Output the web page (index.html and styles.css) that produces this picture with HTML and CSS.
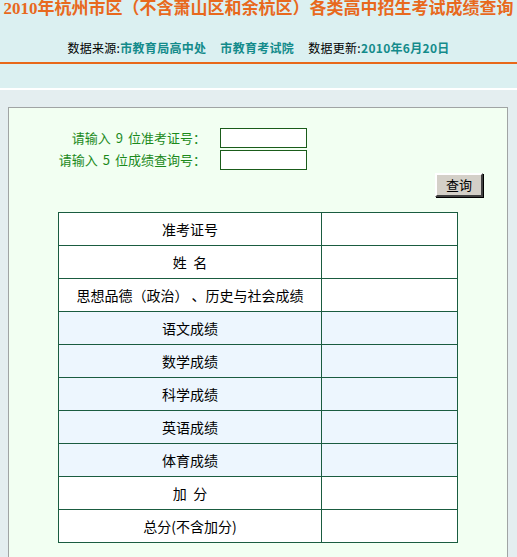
FILE: index.html
```html
<!DOCTYPE html>
<html lang="zh-CN">
<head>
<meta charset="utf-8">
<title>2010年杭州市区各类高中招生考试成绩查询</title>
<link rel="stylesheet" href="styles.css">
</head>
<body>
<div class="header">
  <h1 class="title">2010年杭州市区（不含萧山区和余杭区）各类高中招生考试成绩查询</h1>
  <p class="source">数据来源:<span class="hl">市教育局高中处</span><span class="hl gap">市教育考试院</span><span class="gap">数据更新:</span><span class="hl">2010年6月20日</span></p>
  <div class="rule"></div>
</div>
<div class="panel">
  <form class="query">
    <div class="fields">
      <label class="lbl" for="zkz">请输入<span class="num">9</span>位准考证号：</label>
      <input class="inp" id="zkz" type="text">
      <label class="lbl" for="cjh">请输入<span class="num">5</span>位成绩查询号：</label>
      <input class="inp" id="cjh" type="text">
    </div>
    <div class="actions"><button class="btn" type="button">查询</button></div>
  </form>
  <table class="result">
    <tr><td class="k">准考证号</td><td class="v"></td></tr>
    <tr><td class="k">姓&nbsp;&nbsp;名</td><td class="v"></td></tr>
    <tr><td class="k">思想品德（政治） 、历史与社会成绩</td><td class="v"></td></tr>
    <tr class="alt"><td class="k">语文成绩</td><td class="v"></td></tr>
    <tr class="alt"><td class="k">数学成绩</td><td class="v"></td></tr>
    <tr class="alt"><td class="k">科学成绩</td><td class="v"></td></tr>
    <tr class="alt"><td class="k">英语成绩</td><td class="v"></td></tr>
    <tr class="alt"><td class="k">体育成绩</td><td class="v"></td></tr>
    <tr><td class="k">加&nbsp;&nbsp;分</td><td class="v"></td></tr>
    <tr><td class="k">总分(不含加分)</td><td class="v"></td></tr>
  </table>
</div>
</body>
</html>
```
FILE: styles.css
```css
html, body {
  margin: 0;
  padding: 0;
}
body {
  background: #e4eef0;
  font-family: "Noto Sans CJK SC", "DejaVu Sans", sans-serif;
  color: #000;
  overflow: hidden;
}
.header {
  background: #dbf0f1;
  height: 88px;
  border-bottom: 2px solid #ffffff;
}
.title {
  margin: 0;
  font-family: "Liberation Serif", "Noto Sans CJK SC", serif;
  font-size: 17px;
  line-height: 17px;
  font-weight: bold;
  color: #e8691d;
  text-align: center;
  white-space: nowrap;
}
.source {
  margin: 24px 0 0;
  font-size: 12px;
  line-height: 14px;
  text-align: center;
  white-space: nowrap;
  letter-spacing: 0.3px;
}
.hl {
  color: #138b8b;
  font-weight: bold;
}
.gap {
  margin-left: 14px;
}
.rule {
  margin-top: 7px;
  height: 2px;
  background: #e8681a;
}
.panel {
  box-sizing: border-box;
  width: 500px;
  margin: 17px 0 0 8px;
  padding: 20px 0 40px;
  background: #f2fff2;
  border: 1px solid #a0a4a4;
  border-bottom: none;
  height: 460px;
}
.query {
  margin: 0;
}
.fields {
  display: grid;
  grid-template-columns: 197px 87px;
  column-gap: 14px;
  row-gap: 2px;
  align-items: center;
}
.lbl {
  text-align: right;
  font-size: 13px;
  line-height: 20px;
  color: #1b8a1b;
  white-space: nowrap;
}
.num {
  display: inline-block;
  margin: 0 5px;
}
.inp {
  box-sizing: border-box;
  width: 87px;
  height: 20px;
  margin: 0;
  padding: 0 2px;
  border: 1px solid #1a5c1a;
  background: #ffffff;
  font-size: 12px;
}
.actions {
  display: flex;
  justify-content: flex-end;
  padding-right: 24px;
  margin-top: 3px;
}
.btn {
  box-sizing: border-box;
  width: 48px;
  height: 24px;
  margin: 0;
  padding: 0;
  background: #d4d0c8;
  border: 2px solid;
  border-color: #ffffff #404040 #404040 #ffffff;
  box-shadow: 1px 1px 0 #000000;
  font-family: "Noto Sans CJK SC", sans-serif;
  font-size: 13px;
  line-height: 18px;
  color: #000;
}
.result {
  width: 400px;
  margin: 15px auto 0;
  border-collapse: collapse;
  background: #ffffff;
}
.result td {
  border: 1px solid #1a5c40;
  height: 33px;
  padding: 0;
  font-size: 14px;
  line-height: 16px;
  text-align: center;
  box-sizing: border-box;
}
.result .k {
  width: 263px;
}
.result tr.alt td {
  background: #edf6fe;
}
```
